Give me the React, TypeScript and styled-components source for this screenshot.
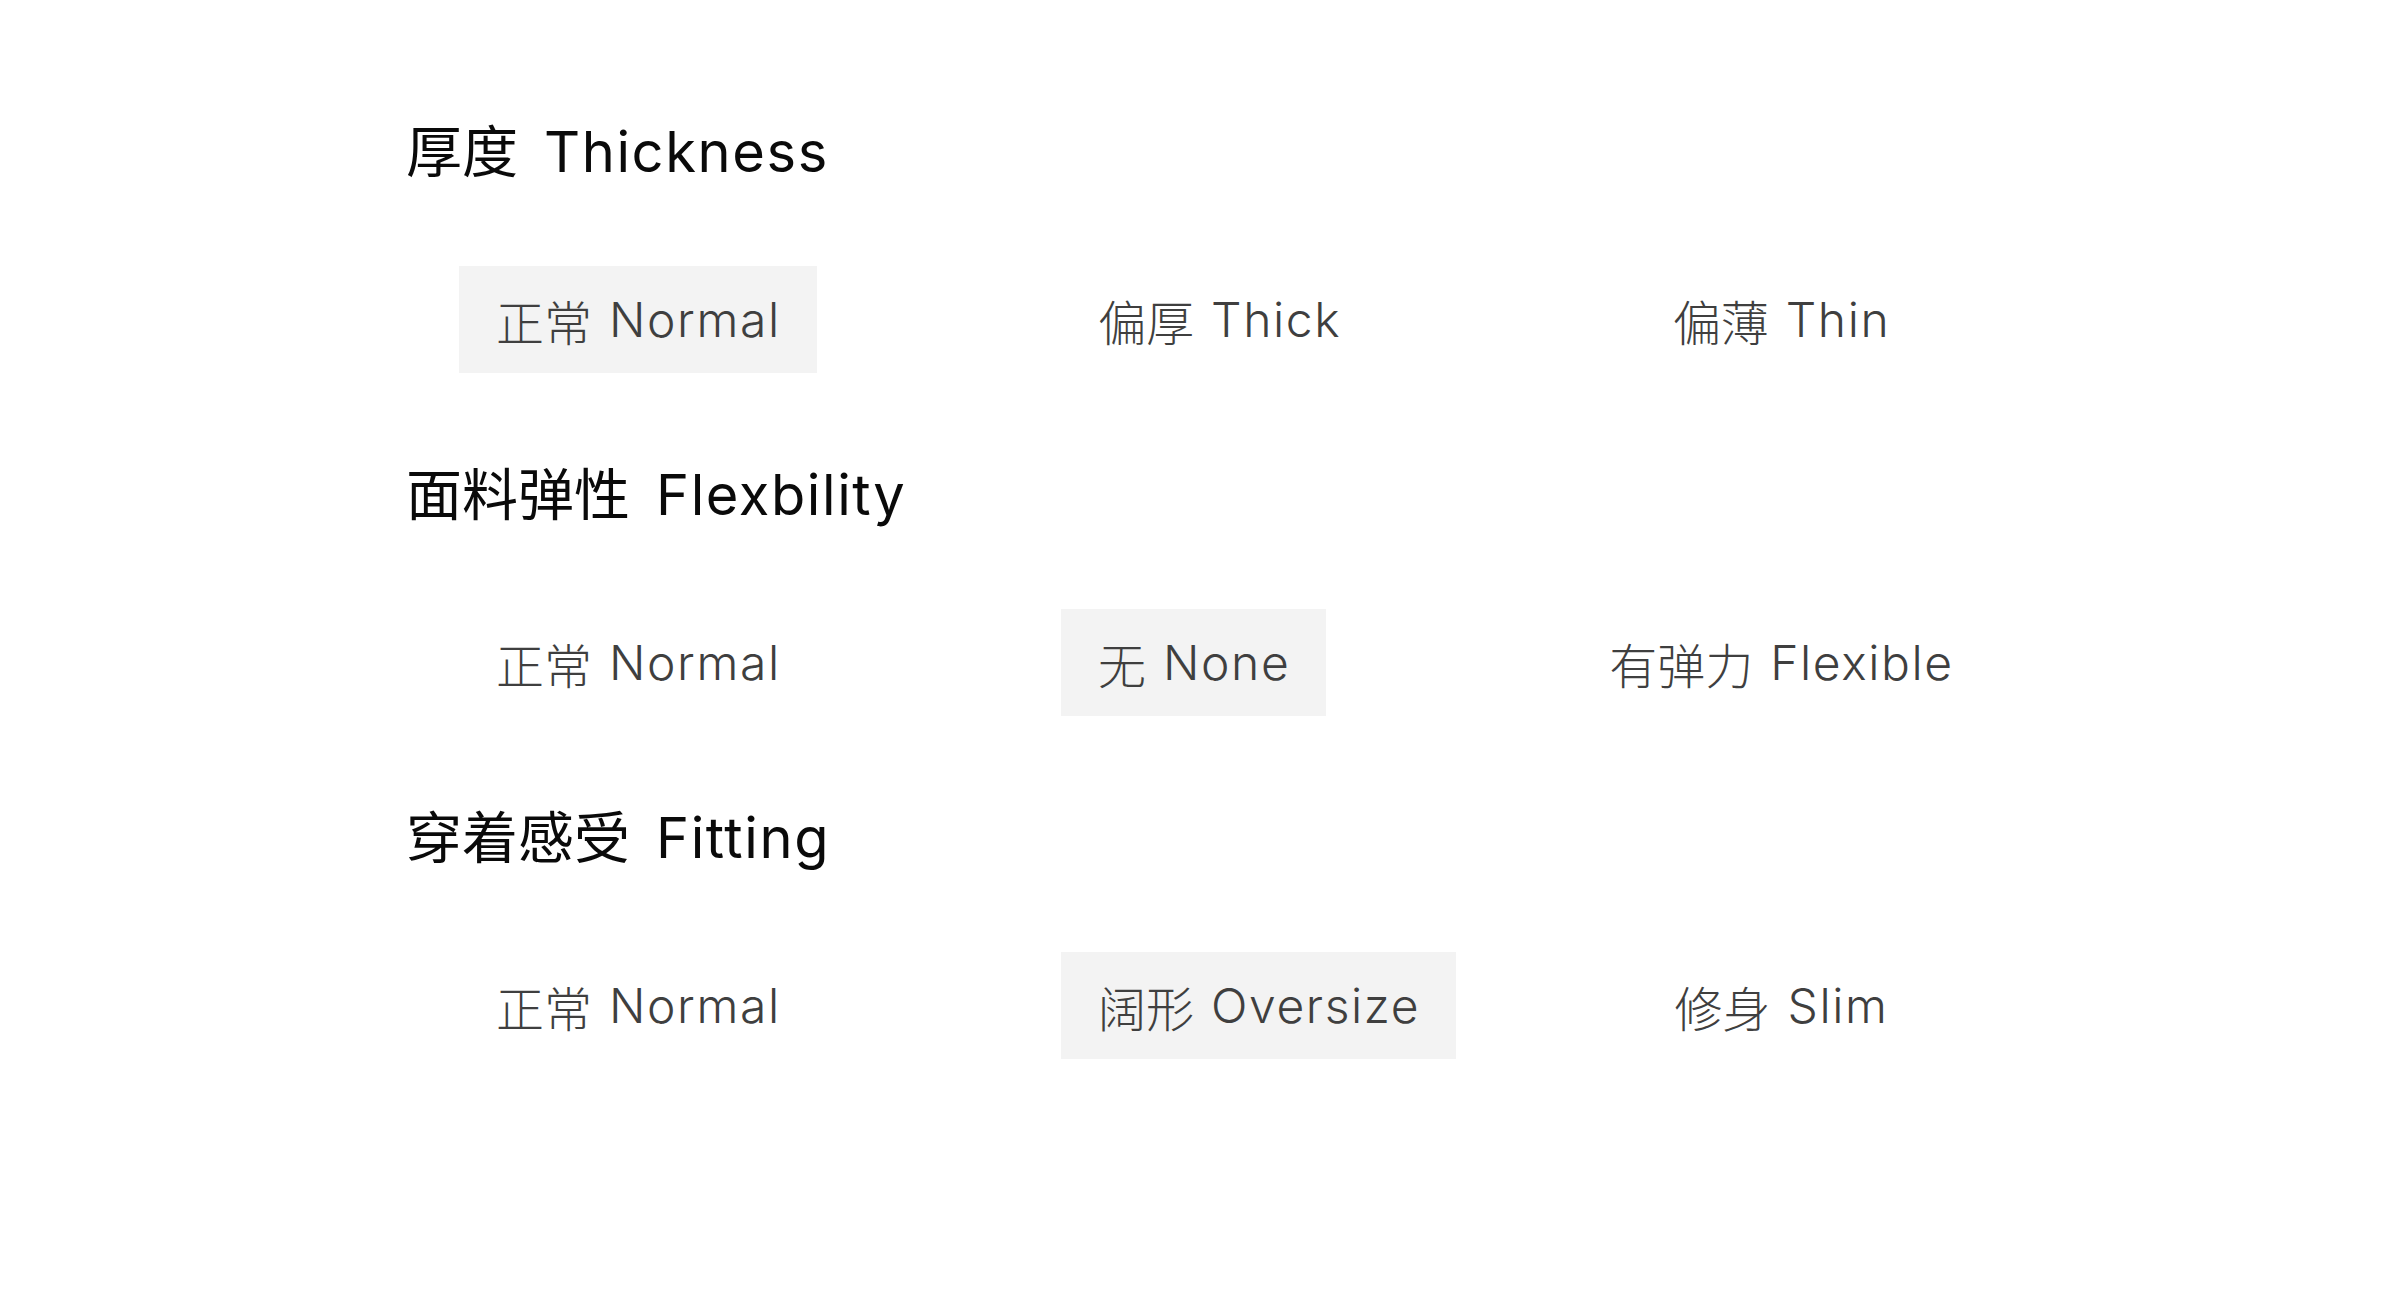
import React from "react";
import styled, { createGlobalStyle } from "styled-components";

interface Option {
  zh: string;
  en: string;
  selected?: boolean;
}

interface Group {
  zh: string;
  en: string;
  options: Option[];
}

const groups: Group[] = [
  {
    zh: "厚度",
    en: "Thickness",
    options: [
      { zh: "正常", en: "Normal", selected: true },
      { zh: "偏厚", en: "Thick" },
      { zh: "偏薄", en: "Thin" },
    ],
  },
  {
    zh: "面料弹性",
    en: "Flexbility",
    options: [
      { zh: "正常", en: "Normal" },
      { zh: "无", en: "None", selected: true },
      { zh: "有弹力", en: "Flexible" },
    ],
  },
  {
    zh: "穿着感受",
    en: "Fitting",
    options: [
      { zh: "正常", en: "Normal" },
      { zh: "阔形", en: "Oversize", selected: true },
      { zh: "修身", en: "Slim" },
    ],
  },
];

const GlobalStyle = createGlobalStyle`
  html, body {
    margin: 0;
    padding: 0;
    background: #ffffff;
  }
  body {
    font-family: Inter, "Noto Sans CJK SC", sans-serif;
  }
`;

const Page = styled.div`
  width: 2400px;
  min-height: 1297px;
  box-sizing: border-box;
  padding: 112px 0 0 406px;
  display: flex;
  flex-direction: column;
  gap: 82px;
`;

const Section = styled.section`
  display: flex;
  flex-direction: column;
  gap: 74px;
`;

const Heading = styled.h2`
  margin: 0;
  height: 80px;
  line-height: 80px;
  font-size: 56px;
  font-weight: 400;
  color: #0a0a0a;
  white-space: nowrap;
`;

// latin part of a label sits a bit further from the chinese part
const Latin = styled.span<{ $gap: number }>`
  margin-left: ${(p) => p.$gap}px;
  letter-spacing: 1.6px;
`;

const OptionRow = styled.div`
  margin-left: 53px;
  display: grid;
  grid-template-columns: 602px 480px 480px;
  align-items: center;
`;

const Chip = styled.div<{ $selected?: boolean; $center?: boolean }>`
  justify-self: ${(p) => (p.$center ? "center" : "start")};
  height: 107px;
  box-sizing: border-box;
  padding: 0 36px 0 37px;
  display: inline-flex;
  align-items: center;
  background: ${(p) => (p.$selected ? "#f3f3f3" : "transparent")};
  font-size: 48px;
  font-weight: 300;
  color: #3f3f3f;
  white-space: nowrap;
`;

export default function App() {
  return (
    <>
      <GlobalStyle />
      <Page>
        {groups.map((g) => (
          <Section key={g.en}>
            <Heading>
              {g.zh}
              <Latin $gap={26}>{g.en}</Latin>
            </Heading>
            <OptionRow>
              {g.options.map((o, i) => (
                <Chip key={o.en + i} $selected={o.selected} $center={i === 2}>
                  {o.zh}
                  <Latin $gap={17}>{o.en}</Latin>
                </Chip>
              ))}
            </OptionRow>
          </Section>
        ))}
      </Page>
    </>
  );
}
